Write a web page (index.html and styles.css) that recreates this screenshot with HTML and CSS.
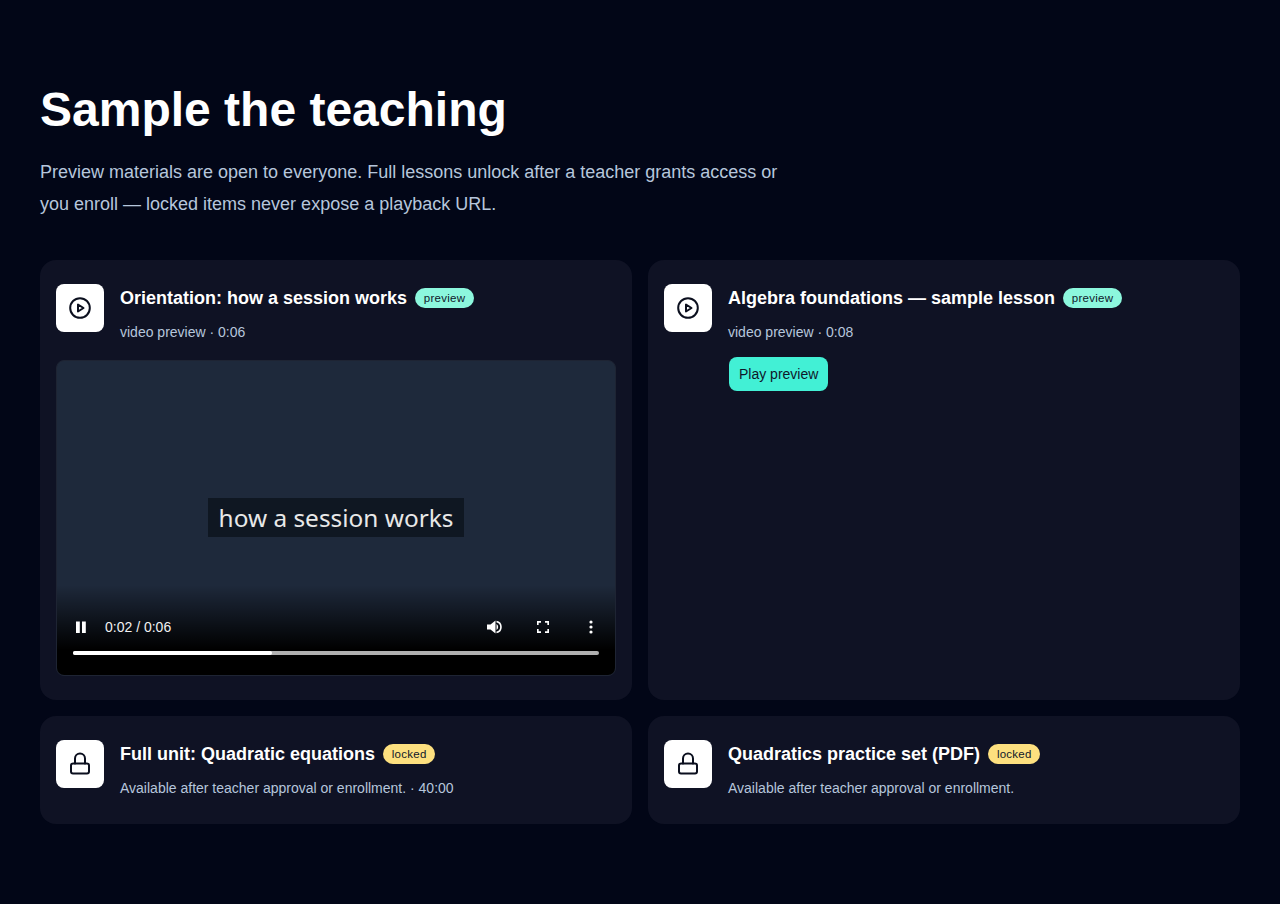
FILE: index.html
```html
<!DOCTYPE html>
<html lang="en">
<head>
<meta charset="utf-8">
<title>Sample the teaching</title>
<link rel="stylesheet" href="styles.css">
</head>
<body>
<main class="page">
  <h1 class="title">Sample the teaching</h1>
  <p class="lead">Preview materials are open to everyone. Full lessons unlock after a teacher grants access or you enroll — locked items never expose a playback URL.</p>
  <div class="grid">
    <article class="card">
      <div class="row">
        <div class="icon"><svg viewBox="0 0 24 24" width="24" height="24" fill="none" stroke="#0b0f1e" stroke-width="2" stroke-linecap="round" stroke-linejoin="round"><circle cx="12" cy="12" r="9.800"/><path d="M10 8.500v7l5.500-3.500z"/></svg></div>
        <div class="body">
          <div class="head"><h2 class="name">Orientation: how a session works</h2><span class="badge badge-preview">preview</span></div>
          <p class="meta">video preview · 0:06</p>
        </div>
      </div>
      <div class="video">
        <span class="caption">how a session works</span>
        <div class="controls">
          <div class="ctl-row">
            <svg class="pause" viewBox="0 0 12 12" width="12" height="12" fill="#fff"><rect x="1" y="0.5" width="3.800" height="11.500"/><rect x="7" y="0.5" width="3.800" height="11.500"/></svg>
            <span class="time">0:02 / 0:06</span>
            <svg class="vol" viewBox="0 0 16 14" width="16" height="14" fill="#fff"><path d="M0 4.500h3.500L8.500 .5v13L3.500 9.500H0z"/><path d="M9.500 4a3.500 3.500 0 0 1 0 6z"/><path d="M9.500 .7v1.800a4.600 4.600 0 0 1 0 9v1.800a6.400 6.400 0 0 0 0-12.600z"/></svg>
            <svg class="full" viewBox="0 0 12 12" width="12" height="12" fill="none" stroke="#fff" stroke-width="1.700"><path d="M.8 4V.8H4M8 .8h3.200V4M11.200 8v3.200H8M4 11.200H.8V8"/></svg>
            <svg class="more" viewBox="0 0 4 14" width="4" height="14" fill="#fff"><circle cx="2" cy="2" r="1.600"/><circle cx="2" cy="7" r="1.600"/><circle cx="2" cy="12" r="1.600"/></svg>
          </div>
          <div class="track"><div class="played"></div></div>
        </div>
      </div>
    </article>
    <article class="card">
      <div class="row">
        <div class="icon"><svg viewBox="0 0 24 24" width="24" height="24" fill="none" stroke="#0b0f1e" stroke-width="2" stroke-linecap="round" stroke-linejoin="round"><circle cx="12" cy="12" r="9.800"/><path d="M10 8.500v7l5.500-3.500z"/></svg></div>
        <div class="body">
          <div class="head"><h2 class="name">Algebra foundations — sample lesson</h2><span class="badge badge-preview">preview</span></div>
          <p class="meta">video preview · 0:08</p>
          <button class="play" type="button">Play preview</button>
        </div>
      </div>
    </article>
    <article class="card">
      <div class="row">
        <div class="icon"><svg viewBox="0 0 24 24" width="24" height="24" fill="none" stroke="#0b0f1e" stroke-width="2" stroke-linecap="round" stroke-linejoin="round"><rect x="3" y="11.500" width="18" height="10" rx="2"/><path d="M7 11.500V6.500a5 5 0 0 1 10 0v5"/></svg></div>
        <div class="body">
          <div class="head"><h2 class="name">Full unit: Quadratic equations</h2><span class="badge badge-locked">locked</span></div>
          <p class="meta">Available after teacher approval or enrollment. · 40:00</p>
        </div>
      </div>
    </article>
    <article class="card">
      <div class="row">
        <div class="icon"><svg viewBox="0 0 24 24" width="24" height="24" fill="none" stroke="#0b0f1e" stroke-width="2" stroke-linecap="round" stroke-linejoin="round"><rect x="3" y="11.500" width="18" height="10" rx="2"/><path d="M7 11.500V6.500a5 5 0 0 1 10 0v5"/></svg></div>
        <div class="body">
          <div class="head"><h2 class="name">Quadratics practice set (PDF)</h2><span class="badge badge-locked">locked</span></div>
          <p class="meta">Available after teacher approval or enrollment.</p>
        </div>
      </div>
    </article>
  </div>
</main>
</body>
</html>
```
FILE: styles.css
```css
* { box-sizing: border-box; }
html { margin: 0; padding: 0; background: #020617; }
body {
  margin: 0;
  padding: 0;
  background: #020617;
  color: #fff;
  font-family: "Liberation Sans", Arial, sans-serif;
  min-height: 904px;
}
.page { padding: 80px 40px; }
.title {
  margin: 0;
  font-size: 48px;
  line-height: 60px;
  font-weight: 700;
  color: #fff;
}
.lead {
  margin: 16px 0 40px;
  max-width: 768px;
  font-size: 18px;
  line-height: 32px;
  color: #b6c6dc;
}
.grid {
  display: grid;
  grid-template-columns: 1fr 1fr;
  gap: 16px;
}
.card {
  background: #0f1224;
  border-radius: 16px;
  padding: 24px 16px;
}
.row { display: flex; gap: 16px; align-items: flex-start; }
.icon {
  flex: none;
  width: 48px;
  height: 48px;
  border-radius: 8px;
  background: #fff;
  display: flex;
  align-items: center;
  justify-content: center;
}
.body { flex: 1; min-width: 0; }
.head { display: flex; align-items: center; gap: 8px; height: 28px; }
.name { margin: 0; font-size: 18px; line-height: 28px; font-weight: 700; color: #fff; }
.badge {
  font-size: 11.500px;
  letter-spacing: 0.25px;
  line-height: 20px;
  height: 20px;
  padding: 0 8.800px;
  border-radius: 10px;
  color: #0f172a;
}
.badge-preview { background: #8cf7dd; }
.badge-locked { background: #fde07f; }
.meta { margin: 8px 0 0; font-size: 14px; line-height: 24px; color: #b6c6dc; }
.play {
  display: block;
  margin: 13px 0 0 1px;
  height: 34px;
  padding: 0 10px;
  border: 0;
  border-radius: 8px;
  background: #42f0d5;
  color: #0f172a;
  font-family: inherit;
  font-size: 14px;
}
.video {
  position: relative;
  margin-top: 16px;
  height: 316px;
  border-radius: 8px;
  border: 1px solid #1e2433;
  background: #1e293b;
  overflow: hidden;
  display: flex;
  align-items: center;
  justify-content: center;
}
.caption {
  margin-bottom: 2px;
  padding: 0 10.500px;
  font-family: "Noto Sans", sans-serif;
  font-size: 24.400px;
  line-height: 39px;
  color: #e8e8e8;
  background: #0f1722;
}
.controls {
  position: absolute;
  left: 0;
  right: 0;
  bottom: 0;
  height: 90px;
  padding: 0 16px;
  background: linear-gradient(to bottom, rgba(0,0,0,0), #000 72%);
}
.ctl-row { display: flex; align-items: center; height: 24px; margin-top: 30px; }
.pause { margin-left: 2px; }
.time { margin-left: 18px; font-size: 14px; color: #f2f2f2; flex: 1; }
.vol { margin-right: 34px; }
.full { margin-right: 40px; }
.more { margin-right: 6px; }
.track { height: 4px; margin-top: 12px; background: #b0b0b0; border-radius: 2px; }
.played { height: 4px; width: 199px; background: #fff; border-radius: 2px; }
```
